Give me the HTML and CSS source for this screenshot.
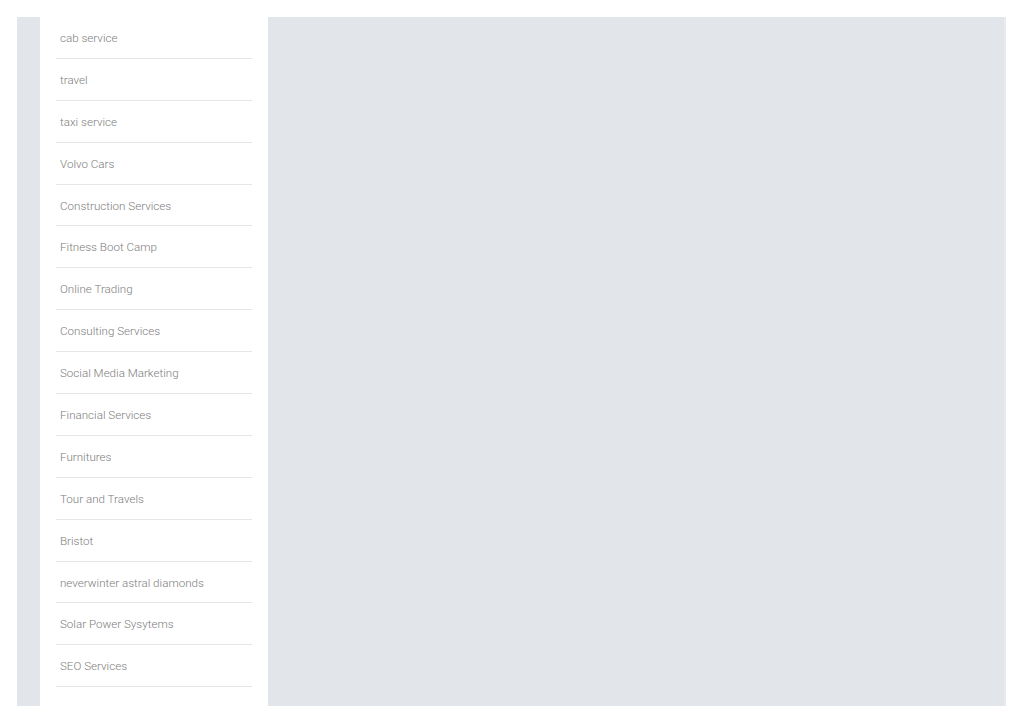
FILE: index.html
```html
<!DOCTYPE html>
<html lang="en">
<head>
  <meta charset="UTF-8" />
  <title>Categories</title>
  <meta name="viewport" content="width=device-width, initial-scale=1.0" />
  <link rel="stylesheet" href="styles.css">
</head>
<body>
  <div class="pagina">
    <div class="faixa"></div>

    <aside class="lateral">
      <ul class="lista">
        <li><a href="#">cab service</a></li>
        <li><a href="#">travel</a></li>
        <li><a href="#">taxi service</a></li>
        <li><a href="#">Volvo Cars</a></li>
        <li><a href="#">Construction Services</a></li>
        <li><a href="#">Fitness Boot Camp</a></li>
        <li><a href="#">Online Trading</a></li>
        <li><a href="#">Consulting Services</a></li>
        <li><a href="#">Social Media Marketing</a></li>
        <li><a href="#">Financial Services</a></li>
        <li><a href="#">Furnitures</a></li>
        <li><a href="#">Tour and Travels</a></li>
        <li><a href="#">Bristot</a></li>
        <li><a href="#">neverwinter astral diamonds</a></li>
        <li><a href="#">Solar Power Sysytems</a></li>
        <li><a href="#">SEO Services</a></li>
      </ul>
    </aside>

    <main class="conteudo"></main>
  </div>
</body>
</html>
```

FILE: styles.css
```css
body { font-family: Roboto, "Liberation Sans", sans-serif; margin: 0; background: #fff; }
.pagina {
  display: flex;
  margin: 17px 18px 17px 17px;
  height: 689px;
  background: #e2e5e9;
}
.faixa { width: 23px; flex-shrink: 0; }
.lateral {
  width: 228px;
  flex-shrink: 0;
  background: #fff;
  padding: 0 16px 20px;
  box-sizing: border-box;
}
.lista { list-style: none; margin: 0; padding: 0; }
.lista li {
  height: 41.9px;
  border-bottom: 1px solid #e6e6e6;
  box-sizing: border-box;
  display: flex;
  align-items: center;
  padding: 1px 0 0 4px;
}
.lista a {
  color: #7d7d7d;
  font-size: 11.6px;
  font-weight: 300;
  text-decoration: none;
}
.conteudo {
  flex: 1;
  background: #e2e5e9;
  border-right: 2px solid #e8eaed;
}
```
